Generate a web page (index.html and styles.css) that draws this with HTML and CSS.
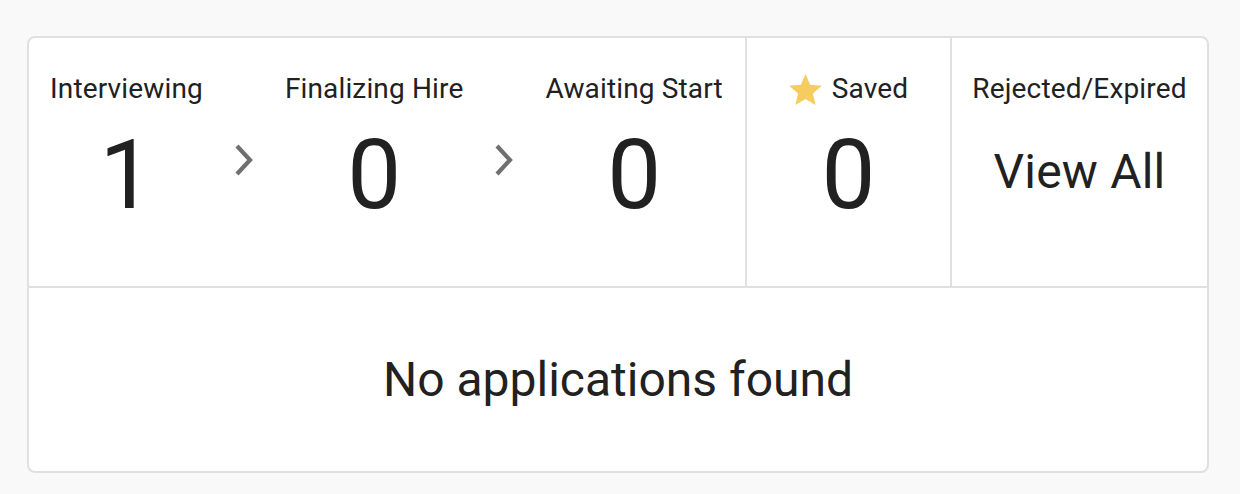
FILE: index.html
```html
<!DOCTYPE html>
<html lang="en">
<head>
<meta charset="utf-8">
<title>Applications</title>
<link rel="stylesheet" href="styles.css">
</head>
<body>
<div class="card">
  <div class="stats">
    <div class="group">
      <div class="stat">
        <div class="label">Interviewing</div>
        <div class="value">1</div>
      </div>
      <div class="chevron">
        <svg width="20" height="34" viewBox="0 0 20 34"><path d="M3 3 L16 17 L3 31" fill="none" stroke="#6f6f6f" stroke-width="4.2"/></svg>
      </div>
      <div class="stat">
        <div class="label">Finalizing Hire</div>
        <div class="value">0</div>
      </div>
      <div class="chevron">
        <svg width="20" height="34" viewBox="0 0 20 34"><path d="M3 3 L16 17 L3 31" fill="none" stroke="#6f6f6f" stroke-width="4.2"/></svg>
      </div>
      <div class="stat">
        <div class="label">Awaiting Start</div>
        <div class="value">0</div>
      </div>
    </div>
    <div class="stat saved">
      <div class="label label-icon">
        <svg class="star" width="33" height="31" viewBox="2 2 20 19"><path d="M12 17.27L18.18 21l-1.64-7.03L22 9.24l-7.19-.61L12 2 9.19 8.63 2 9.24l5.46 4.73L5.82 21z" fill="#f5cc5e"/></svg>
        <span>Saved</span>
      </div>
      <div class="value">0</div>
    </div>
    <div class="stat rejected">
      <div class="label">Rejected/Expired</div>
      <div class="value value-link">View All</div>
    </div>
  </div>
  <div class="empty">No applications found</div>
</div>
</body>
</html>
```
FILE: styles.css
```css
html, body {
  margin: 0;
  padding: 0;
}
body {
  background: #f9f9f9;
  font-family: Roboto, "Liberation Sans", Arial, sans-serif;
  color: #212121;
  padding: 36px 31px 0 27px;
}
.card {
  background: #ffffff;
  border: 2px solid #e0e0e0;
  border-radius: 8px;
  height: 437px;
  box-sizing: border-box;
  display: flex;
  flex-direction: column;
}
.stats {
  display: flex;
  height: 250px;
  border-bottom: 2px solid #e0e0e0;
  box-sizing: border-box;
}
.group {
  display: flex;
  width: 716px;
  flex: none;
}
.stat {
  display: flex;
  flex-direction: column;
  align-items: center;
  padding: 35px 0 0;
  box-sizing: border-box;
}
.group .stat {
  padding-left: 21px;
  padding-right: 21px;
}
.label {
  font-size: 28px;
  line-height: 32px;
  letter-spacing: 0.15px;
  white-space: nowrap;
}
.label-icon {
  display: flex;
  align-items: center;
  gap: 10px;
}
.star {
  display: block;
}
.value {
  font-size: 96px;
  line-height: 96px;
  margin-top: 22px;
}
.value-link {
  font-size: 48px;
  line-height: 90px;
  letter-spacing: 0.2px;
}
.chevron {
  width: 40px;
  flex: none;
  display: flex;
  justify-content: center;
  padding-top: 105px;
  box-sizing: border-box;
}
.chevron svg {
  display: block;
}
.saved {
  width: 205px;
  flex: none;
  border-left: 2px solid #e0e0e0;
}
.rejected {
  flex: 1;
  border-left: 2px solid #e0e0e0;
}
.empty {
  flex: 1;
  display: flex;
  align-items: center;
  justify-content: center;
  font-size: 48px;
  line-height: 48px;
}
```
